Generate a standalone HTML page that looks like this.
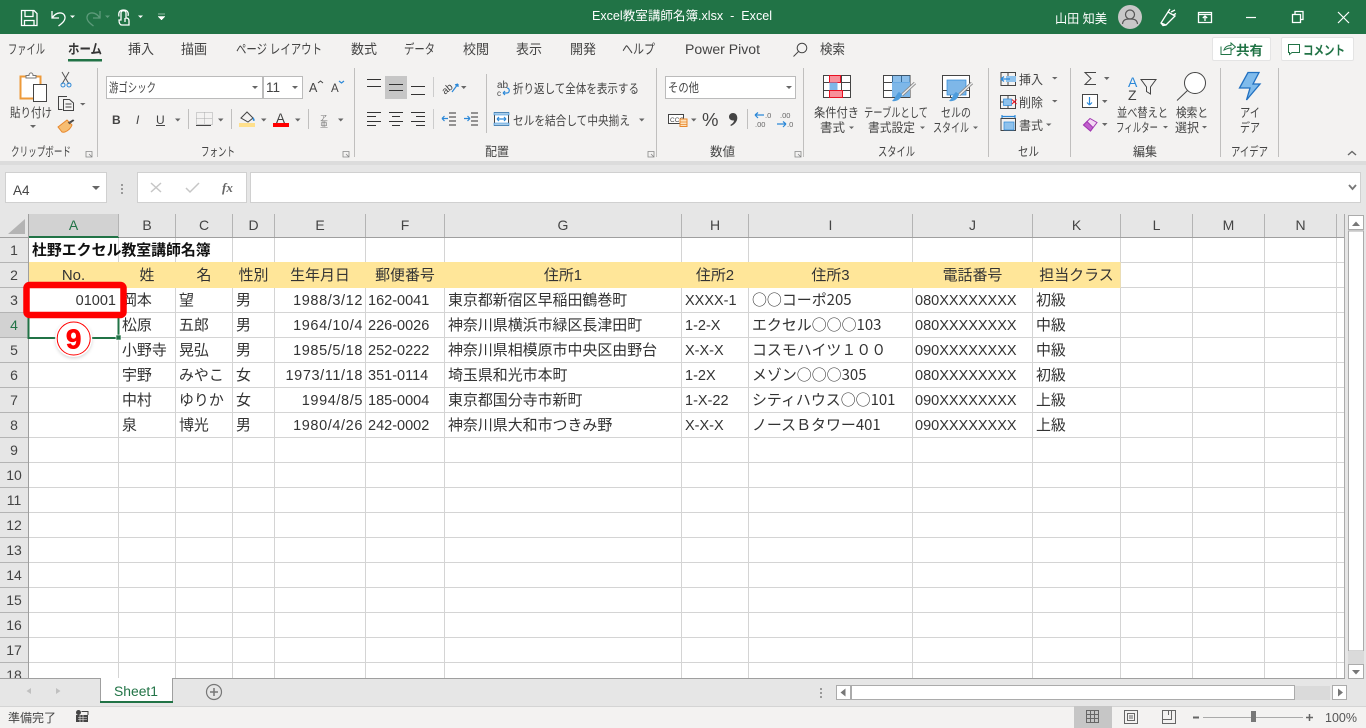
<!DOCTYPE html>
<html lang="ja"><head><meta charset="utf-8"><title>Excel教室講師名簿.xlsx - Excel</title>
<style>
html,body{margin:0;padding:0;width:1366px;height:728px;overflow:hidden;background:#fff}
svg{display:block}
text{font-family:"Liberation Sans","Noto Sans CJK JP",sans-serif;white-space:pre}
.r{font-size:12.5px;fill:#444}
.t{font-size:13.5px;fill:#444}
.c{font-size:14.95px;fill:#333}
.d{font-size:14.5px;fill:#333}
.j{font-family:"Noto Sans CJK JP","Liberation Sans",sans-serif}
.ce{font-size:14.95px;fill:#333;text-anchor:middle}
.e{font-size:14.5px;fill:#333;text-anchor:end;letter-spacing:.6px}
.h{font-size:14px;fill:#444;text-anchor:middle}
.i{fill:none;stroke:#444;stroke-width:1}
.b{fill:none;stroke:#2b88d8;stroke-width:1.2}
.w{fill:none;stroke:#fff;stroke-width:1.3}
.ar{fill:#666}
</style></head><body>
<svg width="1366" height="728" viewBox="0 0 1366 728" xmlns="http://www.w3.org/2000/svg">
<defs>
<clipPath id="g"><rect x="0" y="214" width="1345" height="464"/></clipPath>
<filter id="sh" x="-30%" y="-30%" width="160%" height="160%"><feGaussianBlur stdDeviation="1.6"/></filter>
</defs>

<!-- backgrounds -->
<rect x="0" y="0" width="1366" height="34" fill="#217346"/>
<rect x="0" y="34" width="1366" height="127" fill="#f3f2f1"/>
<rect x="0" y="161" width="1366" height="4" fill="#dcdcdc"/>
<rect x="0" y="165" width="1366" height="541" fill="#e6e6e6"/>
<rect x="0" y="706" width="1366" height="22" fill="#f3f2f1"/>

<!-- title bar icons -->
<path class="w" d="M21.5 10.5H34L37 13.5V25.5H21.5ZM25 10.5V16.5H33V10.5M24.5 25.5V20.5H34V25.5"/>
<path class="w" d="M52 11V18H59M52.5 17.5C56 12 64 11 65 17C65.5 21 61 24 58.5 26" stroke-width="1.4"/>
<path d="M70 15.5H75L72.5 18Z" fill="#fff"/>
<path d="M100 11V18H93M99.5 17.5C96 12 88 11 87 17C86.5 21 91 24 93.5 26" fill="none" stroke="#5d9b7b" stroke-width="1.3"/>
<path d="M105 15.5H110L107.5 18Z" fill="#5d9b7b"/>
<path class="w" d="M121 20V13C121 10 126 10 126 13V18C128 18 129 19 129 21V25H122C120 25 119 23 119 20ZM119 16.5C118 12 120 10 123.5 10C127 10 129 12 128 16M125 18V22"/>
<path d="M138 15.5H143L140.5 18Z" fill="#fff"/>
<path d="M158 14H165M158 16.5H165L161.5 20Z" fill="#fff" stroke="#fff" stroke-width=".5"/>
<text x="592" y="20" font-size="12.5" fill="#fff" textLength="180" lengthAdjust="spacingAndGlyphs">Excel教室講師名簿.xlsx  -  Excel</text>
<text x="1055" y="23" font-size="12.5" fill="#fff" textLength="52" lengthAdjust="spacingAndGlyphs">山田 知美</text>
<circle cx="1130" cy="17" r="12" fill="#c8c8c8"/>
<circle cx="1130" cy="14.5" r="4.5" fill="none" stroke="#555" stroke-width="1.2"/>
<path d="M1122.5 24C1123 19.5 1126 19 1130 19S1137 19.5 1137.5 24" fill="none" stroke="#555" stroke-width="1.2"/>
<path class="w" d="M1161 23L1168 12L1175 16L1166 25ZM1161 23L1163 25.5L1166 25M1171 12L1175 10M1173 15L1176 13.5M1168 12L1170 9"/>
<path class="w" d="M1198.5 12.5H1211.5V22.5H1198.5ZM1198.5 14.5H1211.5M1205 21V16M1202.8 18L1205 16L1207.2 18"/>
<path d="M1246 17.5H1256" stroke="#fff" stroke-width="1.2"/>
<path class="w" d="M1292.5 14.5H1300.5V22.5H1292.5ZM1295 14V11.5H1303V19.5H1300.5"/>
<path d="M1338 12L1349 23M1349 12L1338 23" stroke="#fff" stroke-width="1.2"/>

<!-- tabs -->
<text class="t" x="8" y="54" textLength="37" lengthAdjust="spacingAndGlyphs">ファイル</text>
<text class="t" x="68" y="54" textLength="34" lengthAdjust="spacingAndGlyphs" font-weight="700" style="fill:#333">ホーム</text>
<rect x="68" y="59" width="34" height="2.5" fill="#217346"/>
<text class="t" x="128" y="54" textLength="26" lengthAdjust="spacingAndGlyphs">挿入</text>
<text class="t" x="181" y="54" textLength="26" lengthAdjust="spacingAndGlyphs">描画</text>
<text class="t" x="236" y="54" textLength="86" lengthAdjust="spacingAndGlyphs">ページ レイアウト</text>
<text class="t" x="351" y="54" textLength="26" lengthAdjust="spacingAndGlyphs">数式</text>
<text class="t" x="404" y="54" textLength="31" lengthAdjust="spacingAndGlyphs">データ</text>
<text class="t" x="463" y="54" textLength="26" lengthAdjust="spacingAndGlyphs">校閲</text>
<text class="t" x="516" y="54" textLength="26" lengthAdjust="spacingAndGlyphs">表示</text>
<text class="t" x="570" y="54" textLength="26" lengthAdjust="spacingAndGlyphs">開発</text>
<text class="t" x="622" y="54" textLength="33" lengthAdjust="spacingAndGlyphs">ヘルプ</text>
<text class="t" x="685" y="54" textLength="75" lengthAdjust="spacingAndGlyphs">Power Pivot</text>
<circle cx="802" cy="48" r="4.8" class="i"/><path class="i" d="M798.5 51.5L793.5 56.5"/>
<text class="t" x="820" y="54" textLength="25" lengthAdjust="spacingAndGlyphs">検索</text>
<rect x="1212.5" y="37.5" width="58" height="23" rx="1.5" fill="#fff" stroke="#e4e4e4"/>
<path d="M1221 46.5V54.5H1231V50M1224 50C1225 46.5 1228 45.5 1231 45.5V43L1235.5 47L1231 50.5V48C1228 48 1226 49 1224 50Z" fill="none" stroke="#217346"/>
<text x="1236" y="55" font-size="13" font-weight="700" fill="#217346" textLength="27" lengthAdjust="spacingAndGlyphs">共有</text>
<rect x="1281.5" y="37.5" width="72" height="23" rx="1.5" fill="#fff" stroke="#e4e4e4"/>
<path d="M1288.5 44.5H1299.5V52.5H1292L1289.5 54.5V52.5H1288.5Z" fill="none" stroke="#217346"/>
<text x="1303" y="55" font-size="13" font-weight="700" fill="#217346" textLength="42" lengthAdjust="spacingAndGlyphs">コメント</text>

<!-- ribbon separators -->
<g fill="#c0bfbe">
<rect x="97" y="68" width="1" height="89"/><rect x="354" y="68" width="1" height="89"/><rect x="656" y="68" width="1" height="89"/><rect x="803" y="68" width="1" height="89"/><rect x="988" y="68" width="1" height="89"/><rect x="1070" y="68" width="1" height="89"/><rect x="1220" y="68" width="1" height="89"/><rect x="1278" y="68" width="1" height="89"/>
<rect x="433" y="77" width="1" height="20" fill="#ccc"/><rect x="433" y="109" width="1" height="20" fill="#ccc"/><rect x="486" y="74" width="1" height="59"/>
<rect x="188" y="109" width="1" height="20"/><rect x="231" y="109" width="1" height="20"/><rect x="308" y="109" width="1" height="20"/><rect x="747" y="109" width="1" height="20"/>
</g>

<!-- clipboard -->
<rect x="20.5" y="76.5" width="20" height="22" fill="#fff" stroke="#ed9a3a" stroke-width="2"/>
<path d="M26 78V75.5H29C29 72 33 72 33 75.5H36V78Z" fill="#fff" stroke="#777"/>
<rect x="33.5" y="84.5" width="13" height="17" fill="#fff" stroke="#444"/>
<text class="r" x="10" y="117" textLength="42" lengthAdjust="spacingAndGlyphs">貼り付け</text>
<path class="ar" d="M30 125H36L33 128Z"/>
<path d="M62 72L69 84M69 72L62 84" stroke="#555" fill="none"/>
<circle cx="63" cy="85" r="2" fill="none" stroke="#2b88d8"/><circle cx="69" cy="85" r="2" fill="none" stroke="#2b88d8"/>
<path class="i" d="M62.5 109.5H58.5V96.5H67M63.5 99.5H69.5L73.5 103V110.5H63.5ZM65.5 104H71.5M65.5 107H71.5"/>
<path class="ar" d="M80 103H85.5L82.75 105.5Z"/>
<path d="M58 127L67 120L72 125C70 130 65 133 62 132Z" fill="#f6bd72" stroke="#e8872b"/>
<path class="i" d="M68 123L73 120L74 121M69 124L73.5 120.5"/>
<text class="r" x="11" y="156" textLength="60" lengthAdjust="spacingAndGlyphs">クリップボード</text>
<path d="M86 151.5H92V157H86ZM89 154L92 157" fill="none" stroke="#888" stroke-width=".8"/>

<!-- font -->
<rect x="106.5" y="76.5" width="156" height="22" fill="#fff" stroke="#bbb"/>
<rect x="263.5" y="76.5" width="39" height="22" fill="#fff" stroke="#bbb"/>
<text class="r" x="109" y="92" textLength="47" lengthAdjust="spacingAndGlyphs">游ゴシック</text>
<path class="ar" d="M252 86H258L255 89Z"/><text class="t" x="266" y="92">11</text><path class="ar" d="M292 86H298L295 89Z"/>
<text x="309" y="92" font-size="12.5" fill="#444">A</text><path class="i" d="M318 83L320.5 81L323 83"/>
<text x="331" y="92" font-size="11.5" fill="#444">A</text><path class="b" d="M339 81L341.5 83L344 81"/>
<text x="112" y="124" font-size="12" font-weight="700" fill="#444">B</text>
<text x="136" y="124" font-size="12" font-style="italic" fill="#444" font-family="Liberation Serif">I</text>
<text x="156" y="124" font-size="12" fill="#444">U</text><path class="i" d="M156 125.5H165"/>
<path class="ar" d="M175 118.5H180.5L177.75 121.5Z"/>
<path d="M196.5 112.5H212.5V124.5H196.5ZM204.5 112.5V124.5M196.5 118.5H212.5" fill="none" stroke="#aaa" stroke-dasharray="1 1"/><path d="M196 125.5H211" stroke="#444"/>
<path class="ar" d="M218 118.5H223.5L220.75 121.5Z"/>
<path d="M241 118L247 112L253 118L248 122Z" fill="none" stroke="#444"/><path d="M253 117C255 119 255 121 254 121C252.5 121 252.5 119 253 117Z" fill="#2b88d8"/>
<rect x="239" y="123" width="16" height="4" fill="#ffe08c"/>
<path class="ar" d="M261 118.5H266.5L263.75 121.5Z"/>
<text x="276" y="123" font-size="13.5" fill="#444">A</text>
<rect x="273" y="123" width="16" height="4" fill="#f00"/>
<path class="ar" d="M295 118.5H300.5L297.75 121.5Z"/>
<text x="320" y="120" font-size="7" fill="#777">ア</text><text x="320" y="127" font-size="8" fill="#777">亜</text>
<path class="ar" d="M338 118.5H343.5L340.75 121.5Z"/>
<text class="r" x="201" y="156" textLength="34" lengthAdjust="spacingAndGlyphs">フォント</text>
<path d="M343 151.5H349V157H343ZM346 154L349 157" fill="none" stroke="#888" stroke-width=".8"/>

<!-- alignment -->
<rect x="385" y="76" width="22" height="23" fill="#c6c6c6"/>
<path d="M367 79.5H381M367 86.5H381M389 84.5H403M389 90.5H403M411 86.5H425M411 94.5H425" stroke="#333"/>
<path d="M367 112.5H381M367 116.5H376M367 121.5H381M367 125.5H376M389 112.5H403M392 116.5H400M389 121.5H403M392 125.5H400M411 112.5H425M416 116.5H425M411 121.5H425M416 125.5H425" stroke="#333"/>
<text x="441" y="92" font-size="10" fill="#444" transform="rotate(-40 447 88)">ab</text>
<path class="b" d="M452 92L458 84M458 84L455 85M458 84V87"/>
<path class="ar" d="M461 86H466.5L463.75 89Z"/>
<path d="M449 113H456M449 117H456M449 121H456M449 125H456" stroke="#333"/><path class="b" d="M448 118.5H442M442 118.5L444.5 116M442 118.5L444.5 121"/>
<path d="M471 113H478M471 117H478M471 121H478M471 125H478" stroke="#333"/><path class="b" d="M464 118.5H470M470 118.5L467.5 116M470 118.5L467.5 121"/>
<text x="497" y="88" font-size="10" fill="#444">ab</text><text x="497" y="96" font-size="8" fill="#444">c</text>
<path class="b" d="M503 93H507C510 93 510 88 507 88M503 93L505 91M503 93L505 95"/>
<text class="r" x="513" y="93" textLength="126" lengthAdjust="spacingAndGlyphs">折り返して全体を表示する</text>
<rect x="494.5" y="112.5" width="14" height="13" fill="#fff" stroke="#444"/><path d="M494 112.5H509V115H494ZM494 123H509V125.5H494Z" fill="#a9cdea" stroke="#2b88d8" stroke-width=".6"/><path class="b" d="M497 119H506M497 119L499 117M497 119L499 121M506 119L504 117M506 119L504 121"/>
<text class="r" x="513" y="125" textLength="117" lengthAdjust="spacingAndGlyphs">セルを結合して中央揃え</text>
<path class="ar" d="M639 118.5H644.5L641.75 121.5Z"/>
<text class="r" x="485" y="156" textLength="24" lengthAdjust="spacingAndGlyphs">配置</text>
<path d="M648 151.5H654V157H648ZM651 154L654 157" fill="none" stroke="#888" stroke-width=".8"/>

<!-- number -->
<rect x="665.5" y="76.5" width="130" height="22" fill="#fff" stroke="#bbb"/>
<text class="r" x="668" y="92" textLength="31" lengthAdjust="spacingAndGlyphs">その他</text>
<path class="ar" d="M786 86H792L789 89Z"/>
<rect x="668.5" y="114.5" width="15" height="9" fill="#fff" stroke="#444"/><text x="670" y="122" font-size="6.5" fill="#444">CCC</text>
<path d="M680 119H687V126.5H680Z" fill="#fde2bd" stroke="#e8872b"/><path d="M680 122H687M680 124.5H687" stroke="#e8872b" stroke-width=".7"/>
<path class="ar" d="M691 118.5H696.5L693.75 121.5Z"/>
<text x="702" y="126" font-size="18.5" fill="#444">%</text>
<path d="M733 113C735.5 113 737.3 115 737.3 118C737.3 121.5 734.5 124.5 731 126L730.3 125C732.3 123.8 733.8 122.3 734.2 120.4C731.7 120.9 729 119.6 729 116.8C729 114.6 730.8 113 733 113Z" fill="#444"/>
<path class="b" d="M755 115H764M755 115L758 112.5M755 115L758 118"/>
<text x="765" y="118" font-size="7.5" fill="#666">.0</text><text x="755" y="127" font-size="7.5" fill="#666">.00</text>
<text x="780" y="118" font-size="7.5" fill="#666">.00</text><path class="b" d="M777 124H786M786 124L783 121.5M786 124L783 127"/><text x="787" y="127" font-size="7.5" fill="#666">.0</text>
<text class="r" x="710" y="156" textLength="25" lengthAdjust="spacingAndGlyphs">数値</text>
<path d="M795 151.5H801V157H795ZM798 154L801 157" fill="none" stroke="#888" stroke-width=".8"/>

<!-- styles -->
<path d="M823.5 75.5H850.5V97.5H823.5ZM823.5 82.5H850.5M823.5 90.5H850.5M832.5 75.5V97.5M841.5 75.5V97.5" fill="#fff" stroke="#444"/>
<rect x="829.5" y="75.5" width="11" height="7" fill="#f8909a" stroke="#e81123"/>
<rect x="829.5" y="82.5" width="8" height="8" fill="#7eb7e8"/>
<rect x="829.5" y="90.5" width="13" height="7" fill="#f8909a" stroke="#e81123"/>
<text class="r" x="814" y="117" textLength="45" lengthAdjust="spacingAndGlyphs">条件付き</text>
<text class="r" x="820" y="132" textLength="25" lengthAdjust="spacingAndGlyphs">書式</text><path class="ar" d="M849 126.5H854L851.5 129Z"/>
<path d="M883.5 75.5H910V97.5H883.5ZM883.5 82.5H910M883.5 90.5H910M892.5 75.5V97.5M901.5 75.5V97.5" fill="#fff" stroke="#444"/>
<rect x="892" y="82" width="18" height="15" fill="#7eb7e8"/><rect x="892" y="75.5" width="18" height="7" fill="#2b88d8" opacity=".55"/>
<path d="M915 83L902 95" stroke="#888" stroke-width="3.2"/><path d="M915 83L902 95" stroke="#eee" stroke-width="1.4"/>
<path d="M892 101C897 102 901 99 902 94L899 92C897 93 896 97 892 101Z" fill="#4d9cdc"/>
<text class="r" x="864" y="117" textLength="64" lengthAdjust="spacingAndGlyphs">テーブルとして</text>
<text class="r" x="868" y="132" textLength="47" lengthAdjust="spacingAndGlyphs">書式設定</text><path class="ar" d="M920 126.5H925L922.5 129Z"/>
<path d="M942.5 75.5H969.5V97.5H942.5ZM942.5 90.5H969.5M950.5 90.5V97.5" fill="#fff" stroke="#444"/>
<rect x="947" y="80" width="19" height="15" fill="#7eb7e8" stroke="#2b88d8" stroke-width=".7"/>
<path d="M972 83L959 95" stroke="#888" stroke-width="3.2"/><path d="M972 83L959 95" stroke="#eee" stroke-width="1.4"/>
<path d="M949 101C954 102 958 99 959 94L956 92C954 93 953 97 949 101Z" fill="#4d9cdc"/>
<text class="r" x="941" y="117" textLength="30" lengthAdjust="spacingAndGlyphs">セルの</text>
<text class="r" x="933" y="132" textLength="36" lengthAdjust="spacingAndGlyphs">スタイル</text><path class="ar" d="M973 126.5H978L975.5 129Z"/>
<text class="r" x="878" y="156" textLength="37" lengthAdjust="spacingAndGlyphs">スタイル</text>

<!-- cells -->
<path class="i" d="M1001 72.5H1015.5V85.5H1001ZM1001 79H1015.5M1008 72.5V85.5"/><rect x="1006" y="76" width="10" height="6" fill="#8fc2ec"/><path class="b" d="M1010 79H1001M1001 79L1004 76.5M1001 79L1004 81.5"/>
<text class="r" x="1019" y="84" textLength="24" lengthAdjust="spacingAndGlyphs">挿入</text><path class="ar" d="M1052 77H1057.5L1054.75 79.5Z"/>
<path class="i" d="M1000.5 95.5H1015.5V108.5H1000.5ZM1000.5 102H1006M1008 95.5V99M1008 105V108.5"/><rect x="1003.5" y="99" width="8" height="6.5" fill="#8fc2ec" stroke="#2b88d8" stroke-width=".7"/><path d="M1012 99.5L1016.5 104M1016.5 99.5L1012 104" stroke="#e81123"/>
<text class="r" x="1019" y="107" textLength="24" lengthAdjust="spacingAndGlyphs">削除</text><path class="ar" d="M1052 100H1057.5L1054.75 102.5Z"/>
<path class="i" d="M1001 118.5H1015.5V130.5H1001Z"/><rect x="1004" y="122" width="10" height="8" fill="#8fc2ec" stroke="#2b88d8" stroke-width=".7"/><path class="b" d="M1002 116.5H1015M1002 115V118M1015 115V118"/>
<text class="r" x="1019" y="130" textLength="24" lengthAdjust="spacingAndGlyphs">書式</text><path class="ar" d="M1046 123.5H1051.5L1048.75 126Z"/>
<text class="r" x="1018" y="156" textLength="21" lengthAdjust="spacingAndGlyphs">セル</text>

<!-- editing -->
<path class="i" d="M1096 72.5H1085L1091 78.5L1085 84.5H1096"/><path class="ar" d="M1104 77H1109.5L1106.75 80Z"/>
<rect x="1082.5" y="94.5" width="15" height="13" fill="#fff" stroke="#444"/><path class="b" d="M1089.5 97V105M1089.5 105L1087 102.5M1089.5 105L1092 102.5"/><path class="ar" d="M1102 100H1107.5L1104.75 103Z"/>
<path d="M1083.5 125L1090 118.5L1097 122.5L1090.5 131Z" fill="#f3d8f3" stroke="#a238b2"/><path d="M1083.5 125L1087 121.5L1093 127.5L1090.5 131Z" fill="#c05fcc" stroke="#a238b2"/><path class="ar" d="M1102 123H1107.5L1104.75 126Z"/>
<text x="1128" y="87" font-size="14" fill="#2b88d8">A</text><text x="1128" y="100" font-size="14" fill="#444">Z</text>
<path class="i" d="M1141 79.5H1156L1150.5 87V94L1146.5 91.5V87Z"/>
<text class="r" x="1117" y="117" textLength="51" lengthAdjust="spacingAndGlyphs">並べ替えと</text>
<text class="r" x="1116" y="132" textLength="42" lengthAdjust="spacingAndGlyphs">フィルター</text><path class="ar" d="M1163 126H1168L1165.5 128.5Z"/>
<circle cx="1195" cy="83" r="10.5" fill="#fff" stroke="#444"/><path class="i" d="M1187.5 90.5L1177 100.5"/>
<text class="r" x="1176" y="117" textLength="32" lengthAdjust="spacingAndGlyphs">検索と</text>
<text class="r" x="1175" y="132" textLength="24" lengthAdjust="spacingAndGlyphs">選択</text><path class="ar" d="M1202 126H1207L1204.5 128.5Z"/>
<text class="r" x="1133" y="156" textLength="24" lengthAdjust="spacingAndGlyphs">編集</text>

<!-- ideas -->
<path d="M1248 72.5H1259L1253 84H1260L1246.5 100L1250 88H1239.5Z" fill="#7fbbec" stroke="#2170c0" stroke-width="1.3"/>
<text class="r" x="1240" y="117" textLength="20" lengthAdjust="spacingAndGlyphs">アイ</text>
<text class="r" x="1240" y="132" textLength="20" lengthAdjust="spacingAndGlyphs">デア</text>
<text class="r" x="1231" y="156" textLength="37" lengthAdjust="spacingAndGlyphs">アイデア</text>
<path d="M1348 155L1352 151.5L1356 155" fill="none" stroke="#666" stroke-width="1.4"/>

<!-- formula bar -->
<rect x="5.5" y="172.5" width="101" height="30" fill="#fff" stroke="#d0d0d0"/>
<text x="13" y="195" font-size="13.5" fill="#444">A4</text>
<path class="ar" d="M92 186H100L96 190Z"/>
<g fill="#999"><rect x="121" y="184" width="2" height="2"/><rect x="121" y="188" width="2" height="2"/><rect x="121" y="192" width="2" height="2"/></g>
<rect x="137.5" y="172.5" width="109" height="30" fill="#fff" stroke="#d0d0d0"/>
<path d="M151 183L161 192M161 183L151 192" stroke="#c6c6c6" stroke-width="1.5"/>
<path d="M186 188L190 192L199 183" fill="none" stroke="#c6c6c6" stroke-width="1.5"/>
<text x="222" y="192" font-size="13" font-style="italic" font-weight="700" fill="#666" style="font-family:'Liberation Serif',serif">fx</text>
<rect x="250.5" y="172.5" width="1110" height="30" fill="#fff" stroke="#d0d0d0"/>
<path d="M1349 185L1352.5 189L1356 185" fill="none" stroke="#777" stroke-width="1.8"/>

<!-- grid -->
<g clip-path="url(#g)">
<rect x="29" y="238" width="1316" height="440" fill="#fff"/>
<path d="M29 262.5H1344M29 287.5H1344M29 312.5H1344M29 337.5H1344M29 362.5H1344M29 387.5H1344M29 412.5H1344M29 437.5H1344M29 462.5H1344M29 487.5H1344M29 512.5H1344M29 537.5H1344M29 562.5H1344M29 587.5H1344M29 612.5H1344M29 637.5H1344M29 662.5H1344" stroke="#d4d4d4"/>
<path d="M118.5 238V678M175.5 238V678M232.5 238V678M274.5 238V678M365.5 238V678M444.5 238V678M681.5 238V678M748.5 238V678M912.5 238V678M1032.5 238V678M1120.5 238V678M1192.5 238V678M1264.5 238V678M1336.5 238V678" stroke="#d4d4d4"/>
<rect x="1344" y="214" width="1" height="464" fill="#ababab"/>
<rect x="29" y="262" width="1091.5" height="26" fill="#ffe699"/>

<!-- headers -->
<rect x="0" y="214" width="1344" height="23" fill="#e6e6e6"/>
<rect x="0" y="238" width="28" height="440" fill="#e6e6e6"/>
<rect x="29" y="214" width="90" height="23" fill="#d2d2d2"/>
<rect x="0" y="313" width="28" height="25" fill="#d2d2d2"/>
<path d="M8 234H25V219Z" fill="#b4b4b4"/>
<rect x="0" y="237" width="1344" height="1" fill="#9f9f9f"/>
<rect x="28" y="214" width="1" height="464" fill="#9f9f9f"/>
<rect x="29" y="236" width="90" height="2" fill="#217346"/>
<path d="M118.5 214V237M175.5 214V237M232.5 214V237M274.5 214V237M365.5 214V237M444.5 214V237M681.5 214V237M748.5 214V237M912.5 214V237M1032.5 214V237M1120.5 214V237M1192.5 214V237M1264.5 214V237M1336.5 214V237" stroke="#b4b4b4"/>
<path d="M0 262.5H28M0 287.5H28M0 312.5H28M0 337.5H28M0 362.5H28M0 387.5H28M0 412.5H28M0 437.5H28M0 462.5H28M0 487.5H28M0 512.5H28M0 537.5H28M0 562.5H28M0 587.5H28M0 612.5H28M0 637.5H28M0 662.5H28" stroke="#b4b4b4"/>
<text class="h" x="73.5" y="230" style="fill:#217346">A</text><text class="h" x="147" y="230">B</text><text class="h" x="204" y="230">C</text><text class="h" x="253.5" y="230">D</text><text class="h" x="320" y="230">E</text><text class="h" x="405" y="230">F</text><text class="h" x="563" y="230">G</text><text class="h" x="715" y="230">H</text><text class="h" x="830.5" y="230">I</text><text class="h" x="972.5" y="230">J</text><text class="h" x="1076.5" y="230">K</text><text class="h" x="1156.5" y="230">L</text><text class="h" x="1228.5" y="230">M</text><text class="h" x="1300.5" y="230">N</text>
<text class="h" x="14" y="255">1</text><text class="h" x="14" y="280">2</text><text class="h" x="14" y="305">3</text><text class="h" x="14" y="330" style="fill:#217346">4</text><text class="h" x="14" y="355">5</text><text class="h" x="14" y="380">6</text><text class="h" x="14" y="405">7</text><text class="h" x="14" y="430">8</text><text class="h" x="14" y="455">9</text><text class="h" x="14" y="480">10</text><text class="h" x="14" y="505">11</text><text class="h" x="14" y="530">12</text><text class="h" x="14" y="555">13</text><text class="h" x="14" y="580">14</text><text class="h" x="14" y="605">15</text><text class="h" x="14" y="630">16</text><text class="h" x="14" y="655">17</text><text class="h" x="14" y="680">18</text>
</g>

<!-- cell text -->
<text x="32" y="255" font-size="14.9" font-weight="700" fill="#111">杜野エクセル教室講師名簿</text>
<g>
<text class="ce" x="73.5" y="280">No.</text><text class="ce" x="147" y="280">姓</text><text class="ce" x="204" y="280">名</text><text class="ce" x="253.5" y="280">性別</text><text class="ce" x="320" y="280">生年月日</text><text class="ce" x="405" y="280">郵便番号</text><text class="ce" x="563" y="280">住所1</text><text class="ce" x="715" y="280">住所2</text><text class="ce" x="830.5" y="280">住所3</text><text class="ce" x="972.5" y="280">電話番号</text><text class="ce" x="1076.5" y="280">担当クラス</text>

<text class="c" x="122" y="305">岡本</text><text class="c" x="179" y="305">望</text><text class="c" x="236" y="305">男</text><text class="e" x="363" y="305">1988/3/12</text><text class="d" x="368" y="305">162-0041</text><text class="c" x="448" y="305">東京都新宿区早稲田鶴巻町</text><text class="d" x="685" y="305">XXXX-1</text><text class="c j" x="752" y="305">○○コーポ205</text><text class="d" x="915" y="305">080XXXXXXXX</text><text class="c" x="1036" y="305">初級</text>

<text class="c" x="122" y="330">松原</text><text class="c" x="179" y="330">五郎</text><text class="c" x="236" y="330">男</text><text class="e" x="363" y="330">1964/10/4</text><text class="d" x="368" y="330">226-0026</text><text class="c" x="448" y="330">神奈川県横浜市緑区長津田町</text><text class="d" x="685" y="330">1-2-X</text><text class="c j" x="752" y="330">エクセル○○○103</text><text class="d" x="915" y="330">080XXXXXXXX</text><text class="c" x="1036" y="330">中級</text>

<text class="c" x="122" y="355">小野寺</text><text class="c" x="179" y="355">晃弘</text><text class="c" x="236" y="355">男</text><text class="e" x="363" y="355">1985/5/18</text><text class="d" x="368" y="355">252-0222</text><text class="c" x="448" y="355">神奈川県相模原市中央区由野台</text><text class="d" x="685" y="355">X-X-X</text><text class="c" x="752" y="355">コスモハイツ１００</text><text class="d" x="915" y="355">090XXXXXXXX</text><text class="c" x="1036" y="355">中級</text>

<text class="c" x="122" y="380">宇野</text><text class="c" x="179" y="380">みやこ</text><text class="c" x="236" y="380">女</text><text class="e" x="363" y="380">1973/11/18</text><text class="d" x="368" y="380">351-0114</text><text class="c" x="448" y="380">埼玉県和光市本町</text><text class="d" x="685" y="380">1-2X</text><text class="c j" x="752" y="380">メゾン○○○305</text><text class="d" x="915" y="380">080XXXXXXXX</text><text class="c" x="1036" y="380">初級</text>

<text class="c" x="122" y="405">中村</text><text class="c" x="179" y="405">ゆりか</text><text class="c" x="236" y="405">女</text><text class="e" x="363" y="405">1994/8/5</text><text class="d" x="368" y="405">185-0004</text><text class="c" x="448" y="405">東京都国分寺市新町</text><text class="d" x="685" y="405">1-X-22</text><text class="c j" x="752" y="405">シティハウス○○101</text><text class="d" x="915" y="405">090XXXXXXXX</text><text class="c" x="1036" y="405">上級</text>

<text class="c" x="122" y="430">泉</text><text class="c" x="179" y="430">博光</text><text class="c" x="236" y="430">男</text><text class="e" x="363" y="430">1980/4/26</text><text class="d" x="368" y="430">242-0002</text><text class="c" x="448" y="430">神奈川県大和市つきみ野</text><text class="d" x="685" y="430">X-X-X</text><text class="c j" x="752" y="430">ノースＢタワー401</text><text class="d" x="915" y="430">090XXXXXXXX</text><text class="c" x="1036" y="430">上級</text>
</g>

<!-- selection A4 -->
<rect x="28.5" y="313.5" width="90" height="24.5" fill="#fff" stroke="#217346" stroke-width="2"/>
<rect x="116" y="335" width="5" height="5" fill="#217346" stroke="#fff" stroke-width=".6"/>

<!-- red highlight -->
<rect x="26.5" y="285" width="97" height="30" rx="3" fill="#fff" stroke="#f00" stroke-width="6.5"/>
<text class="d" x="116" y="305" text-anchor="end" font-size="14">01001</text>

<!-- badge -->
<circle cx="73.7" cy="340" r="18.5" fill="#aaa" opacity=".45" filter="url(#sh)"/>
<circle cx="73.7" cy="338.5" r="18.5" fill="#fff"/>
<circle cx="73.7" cy="338.5" r="16.5" fill="#fff" stroke="#f00" stroke-width="1"/>
<text x="73.7" y="348.5" font-size="28" font-weight="700" fill="#f00" text-anchor="middle" stroke="#f00" stroke-width=".6">9</text>

<!-- vertical scrollbar -->
<rect x="1345" y="214" width="21" height="464" fill="#e6e6e6"/>
<rect x="1348.5" y="231" width="15" height="420" fill="#fff" stroke="#ababab"/>
<rect x="1348" y="651" width="16" height="13" fill="#dadada"/>
<rect x="1348.5" y="215.5" width="15" height="14" fill="#fff" stroke="#ababab"/>
<path d="M1352 226H1360L1356 221.5Z" fill="#777"/>
<rect x="1348.5" y="664.5" width="15" height="14" fill="#fff" stroke="#ababab"/>
<path d="M1352 670H1360L1356 674.5Z" fill="#777"/>

<!-- sheet tab bar -->
<rect x="0" y="678" width="1345" height="1" fill="#9f9f9f"/>
<rect x="100" y="678" width="73" height="25" fill="#fff"/>
<rect x="100" y="678" width="1" height="25" fill="#9f9f9f"/><rect x="172" y="678" width="1" height="25" fill="#9f9f9f"/>
<rect x="100" y="701" width="73" height="2" fill="#217346"/>
<text x="114" y="696" font-size="13.5" fill="#217346" textLength="44" lengthAdjust="spacingAndGlyphs">Sheet1</text>
<path d="M31 688V694L26.5 691ZM56 688V694L60.5 691Z" fill="#c0c0c0"/>
<circle cx="214" cy="692" r="7.5" fill="none" stroke="#777" stroke-width="1.2"/><path d="M210 692H218M214 688V696" stroke="#777" stroke-width="1.5"/>
<g fill="#999"><rect x="820" y="688" width="2" height="2"/><rect x="820" y="692" width="2" height="2"/><rect x="820" y="696" width="2" height="2"/></g>
<rect x="836.5" y="685.5" width="14" height="14" fill="#fff" stroke="#ababab"/><path d="M845.5 688.5V696.5L840.5 692.5Z" fill="#777"/>
<rect x="851" y="686" width="479" height="14" fill="#dadada"/>
<rect x="851.5" y="685.5" width="443" height="14" fill="#fff" stroke="#ababab"/>
<rect x="1332.5" y="685.5" width="14" height="14" fill="#fff" stroke="#ababab"/><path d="M1338 688.5V696.5L1343 692.5Z" fill="#777"/>

<!-- status bar -->
<rect x="0" y="706" width="1366" height="1" fill="#d4d4d4"/>
<text x="8" y="722" font-size="12" fill="#444" textLength="48" lengthAdjust="spacingAndGlyphs">準備完了</text>
<circle cx="78.5" cy="712.5" r="2.5" fill="#444"/>
<path d="M76 715H88V722H76Z" fill="#444"/><path d="M82 711H88M78 717.5H87M78 719.5H87M80 715V722M83 715V722" stroke="#f3f2f1" stroke-width=".6"/><path d="M81.5 711.5H88V715" fill="none" stroke="#444"/>
<rect x="1074" y="706" width="38" height="22" fill="#c6c6c6"/>
<path d="M1086.5 710.5H1098.5V722.5H1086.5ZM1086.5 714.5H1098.5M1086.5 718.5H1098.5M1090.5 710.5V722.5M1094.5 710.5V722.5" fill="none" stroke="#666"/>
<rect x="1124.5" y="710.5" width="13" height="13" fill="none" stroke="#666"/><path d="M1127.5 713.5H1134.5V720.5H1127.5ZM1129 716H1133M1129 718H1133" fill="none" stroke="#666"/>
<path d="M1162.5 710.5H1175.5V723.5H1162.5ZM1162.5 719.5H1171.5V710.5M1168.5 710.5V715" fill="none" stroke="#666"/>
<rect x="1193" y="716.5" width="6" height="2" fill="#666"/>
<rect x="1203" y="717" width="100" height="1" fill="#aaa"/>
<rect x="1251" y="711" width="5" height="11" fill="#777"/>
<path d="M1306 717.5H1313M1309.5 714V721" stroke="#666" stroke-width="1.5"/>
<text x="1325" y="722" font-size="12.5" fill="#555">100%</text>
</svg>
</body></html>
